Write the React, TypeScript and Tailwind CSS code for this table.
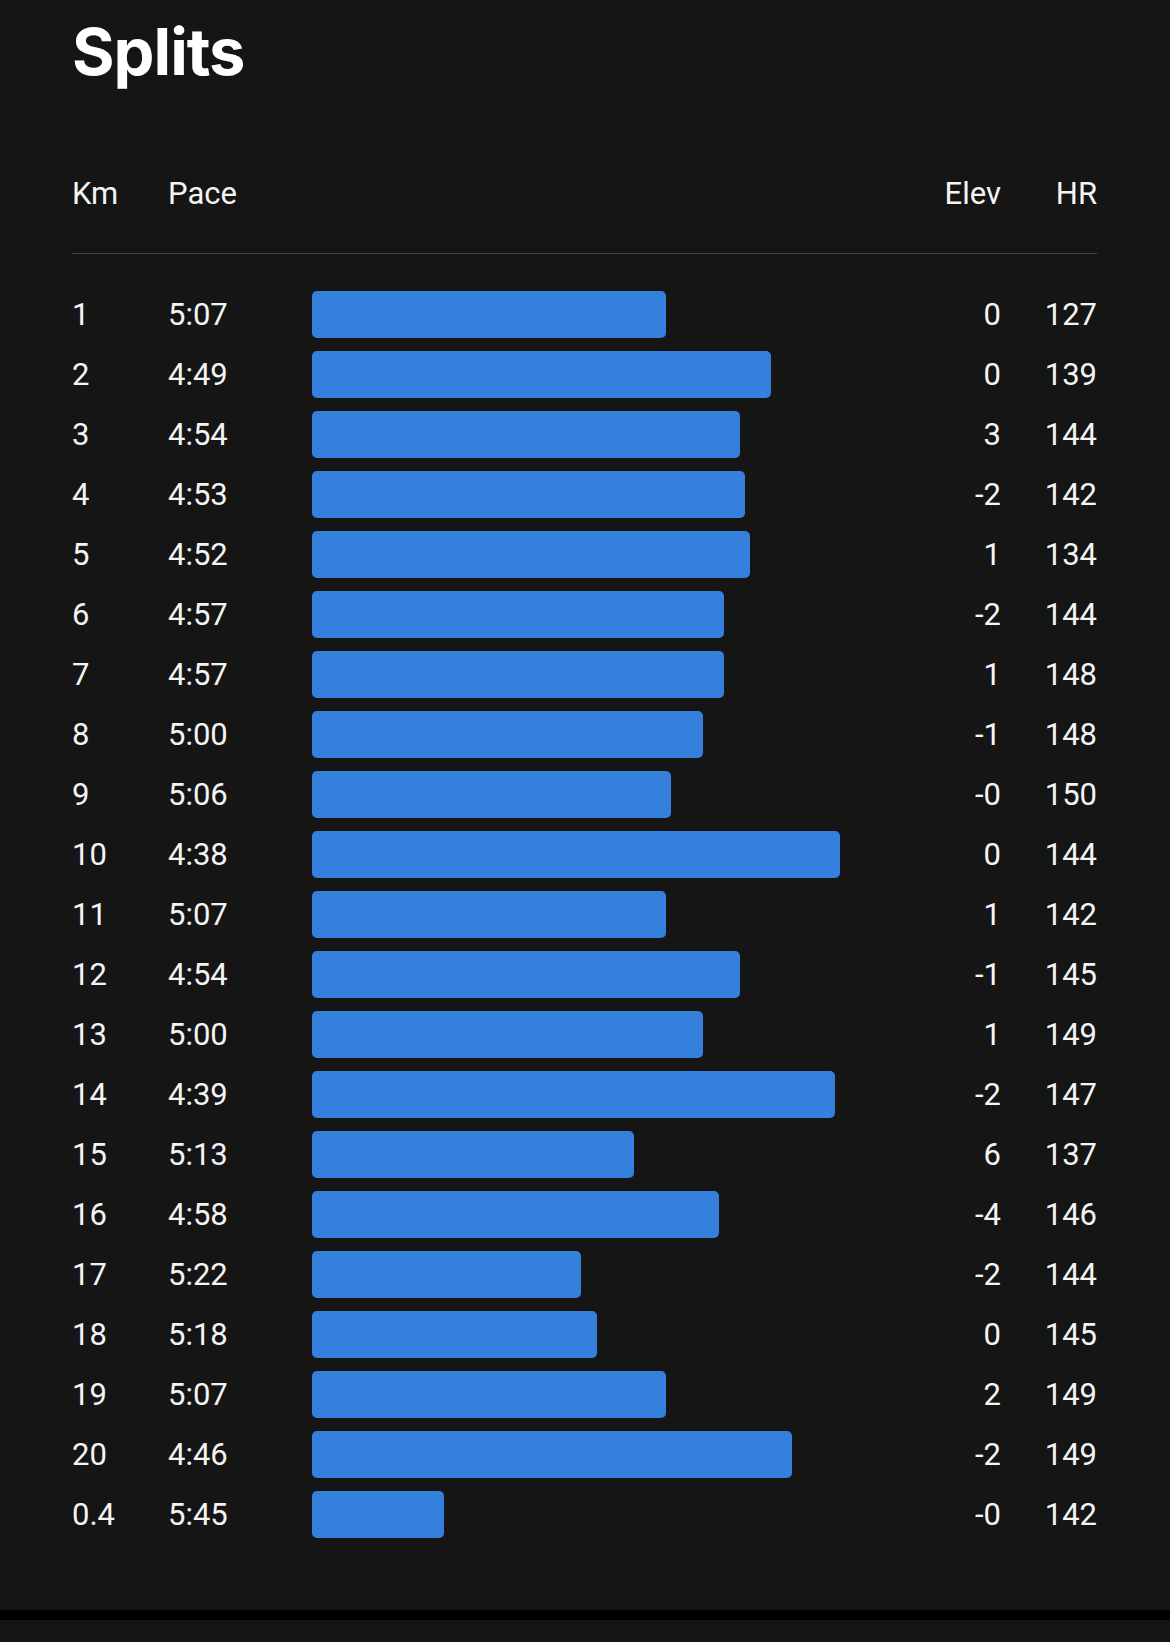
import React from 'react';

type Split = { km: string; pace: string; width: number; elev: string; hr: string };

// bar widths measured in px
const splits: Split[] = [
  { km: '1', pace: '5:07', width: 354, elev: '0', hr: '127' },
  { km: '2', pace: '4:49', width: 459, elev: '0', hr: '139' },
  { km: '3', pace: '4:54', width: 428, elev: '3', hr: '144' },
  { km: '4', pace: '4:53', width: 433, elev: '-2', hr: '142' },
  { km: '5', pace: '4:52', width: 438, elev: '1', hr: '134' },
  { km: '6', pace: '4:57', width: 412, elev: '-2', hr: '144' },
  { km: '7', pace: '4:57', width: 412, elev: '1', hr: '148' },
  { km: '8', pace: '5:00', width: 391, elev: '-1', hr: '148' },
  { km: '9', pace: '5:06', width: 359, elev: '-0', hr: '150' },
  { km: '10', pace: '4:38', width: 528, elev: '0', hr: '144' },
  { km: '11', pace: '5:07', width: 354, elev: '1', hr: '142' },
  { km: '12', pace: '4:54', width: 428, elev: '-1', hr: '145' },
  { km: '13', pace: '5:00', width: 391, elev: '1', hr: '149' },
  { km: '14', pace: '4:39', width: 523, elev: '-2', hr: '147' },
  { km: '15', pace: '5:13', width: 322, elev: '6', hr: '137' },
  { km: '16', pace: '4:58', width: 407, elev: '-4', hr: '146' },
  { km: '17', pace: '5:22', width: 269, elev: '-2', hr: '144' },
  { km: '18', pace: '5:18', width: 285, elev: '0', hr: '145' },
  { km: '19', pace: '5:07', width: 354, elev: '2', hr: '149' },
  { km: '20', pace: '4:46', width: 480, elev: '-2', hr: '149' },
  { km: '0.4', pace: '5:45', width: 132, elev: '-0', hr: '142' },
];

const cols = 'grid grid-cols-[96px_144px_590px_99px_96px] items-center';

const App: React.FC = () => {
  return (
    <div className="w-[1170px] min-h-[1642px] bg-[#151515] text-[#f4f4f4] font-['Roboto',sans-serif] flex flex-col">
      <div className="pl-[72px] pr-[73px]">
        <h1 className="pt-[19px] font-['Inter',sans-serif] text-[65px] font-bold leading-none tracking-[-1px] text-white">
          Splits
        </h1>

        <div className={`${cols} mt-[94px] text-[31px] leading-none`}>
          <span>Km</span>
          <span>Pace</span>
          <span />
          <span className="text-right">Elev</span>
          <span className="text-right">HR</span>
        </div>

        <div className="mt-[44px] h-px bg-[#474747]" />

        <div className="mt-[30px]">
          {splits.map(s => (
            <div key={s.km} className={`${cols} h-[60px] text-[31px] leading-none`}>
              <span>{s.km}</span>
              <span>{s.pace}</span>
              <div>
                <div className="h-[47px] rounded-[5px] bg-[#3580dc]" style={{ width: s.width }} />
              </div>
              <span className="text-right">{s.elev}</span>
              <span className="text-right">{s.hr}</span>
            </div>
          ))}
        </div>
      </div>

      <div className="flex-1" />
      <div className="h-[10px] bg-black" />
      <div className="h-[22px]" />
    </div>
  );
};

export default App;
